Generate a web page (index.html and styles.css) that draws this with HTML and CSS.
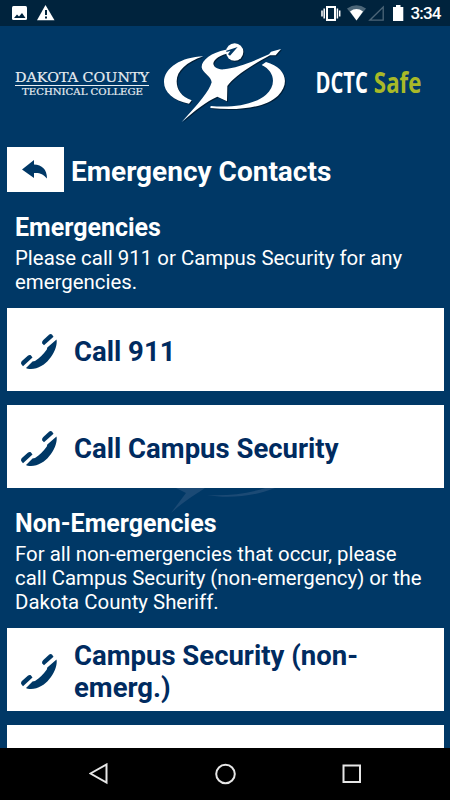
FILE: index.html
```html
<!DOCTYPE html>
<html lang="en">

<head>
    <meta charset="UTF-8">
    <title>DCTC Safe</title>
    <link rel="stylesheet" href="styles.css">
</head>

<body>
    <!-- shared icon -->
    <svg class="defs" width="0" height="0">
        <symbol id="phone" viewBox="0 0 36 36">
            <path d="M35.500 5.500C37.500 15 26 35 10 35C7.500 35 6 34.800 5 34L11.500 27.500L14 27C19 24 22.500 20 25.800 15.500L26.300 13.500Z" />
            <path d="M28 .8L22.300 6C21.100 7.200 20.800 8 21.300 9.500L23 11.200L32.500 2.800L31 .6C30 -.2 29 -.1 28 .8Z" />
            <path d="M6.800 21.800L1.200 26.800C-.1 28 -.2 29 .4 30.200L2 32.200L11.500 23.500L10 21.400C9 20.600 7.800 20.900 6.800 21.800Z" />
        </symbol>
    </svg>

    <div class="status">
        <svg width="60" height="26" viewBox="0 0 60 26">
            <rect x="12" y="6" width="15" height="14" rx="1.5" fill="#fff" />
            <path d="M14 18L17 14.5L19 16.5L22 13L25.5 18Z" fill="#00233d" />
            <path d="M45.500 5L54.500 20.300H37Z" fill="#fff" />
            <path d="M45 10H47V15H45ZM45 16.500H47V18.500H45Z" fill="#00233d" />
        </svg>
        <svg width="132" height="26" viewBox="318 0 132 26">
            <path d="M322 10.500V16.500M324.200 8.500V18.500M337.400 8.500V18.500M339.700 10.500V16.500" stroke="#fff" stroke-width="1.500" />
            <rect x="327" y="7" width="8" height="13" fill="none" stroke="#fff" stroke-width="2" />
            <path d="M347 8.500Q356.500 2 366 8.500L356.500 20.500Z" fill="#4c6678" />
            <path d="M350 11.500Q356.500 6.700 363 11.500L356.500 20.500Z" fill="#fff" />
            <path d="M383.200 7V20.200H369.800Z" fill="none" stroke="#4c6678" stroke-width="1.300" />
            <path d="M393 7H396V5H400.500V7H403.300V21H393Z" fill="#fff" />
            <text x="410.500" y="19.300" textLength="31" class="clock">3:34</text>
        </svg>
    </div>

    <main>
        <header>
            <svg width="150" height="95" viewBox="0 0 150 95">
                <text x="15" y="46.800" textLength="134" lengthAdjust="spacingAndGlyphs" class="college">DAKOTA COUNTY</text>
                <path d="M15 50.500H149" stroke="#e8edf1" stroke-width="1" />
                <text x="22" y="60" textLength="121" lengthAdjust="spacingAndGlyphs" class="technical">TECHNICAL COLLEGE</text>
            </svg>
            <svg width="150" height="95" viewBox="0 0 450 285">
                <g class="logo_shadow" transform="translate(3 3)">
                    <use href="#runner" />
                </g>
                <g id="runner">
                    <path d="M160 64C95 66 42 98 42 141C42 171 70 197 117 206L125 196C94 186 80 163 80 139C80 108 108 82 160 64Z" />
                    <path d="M335 90C375 109 380 150 348 179C316 207 250 220 182 213L181 219C270 229 349 216 384 182C423 143 405 96 348 81Z" />
                    <path d="M227 44C184 53 154 75 155 97C157 113 183 124 185 142C178 169 144 208 95 261C137 225 169 199 202 185L231 199L232 153C248 130 285 101 360 61L377 61L393 42L363 50L357 58C310 79 262 98 222 103C203 105 190 96 190 85C192 73 210 59 240 54Z" />
                    <circle cx="254" cy="51" r="26" />
                </g>
                <path d="M229 47L263 36L240 62L234 58L241 48L229 51Z" class="logo_gap" />
            </svg>
            <svg width="150" height="95" viewBox="0 0 150 95">
                <g transform="scale(.7 1)">
                    <text x="22" y="58" textLength="75" lengthAdjust="spacingAndGlyphs" class="brand">DCTC</text>
                    <text x="105.500" y="58" textLength="68" lengthAdjust="spacingAndGlyphs" class="brand safe">Safe</text>
                </g>
            </svg>
        </header>

        <div class="titel">
            <button class="back" aria-label="Back">
                <svg width="26" height="20" viewBox="0 0 26 20">
                    <path d="M0 9.500L12 0V4.500C20 5 25 9 25 18.500C21 13.500 17 12.500 12 13V18Z" />
                </svg>
            </button>
            <h1>Emergency Contacts</h1>
        </div>

        <section>
            <h2>Emergencies</h2>
            <p>Please call 911 or Campus Security for any emergencies.</p>
            <button class="call"><svg><use href="#phone" /></svg><span>Call 911</span></button>
            <button class="call"><svg><use href="#phone" /></svg><span>Call Campus Security</span></button>
        </section>

        <section class="non">
            <!-- faint logo behind the list -->
            <svg class="watermark" width="150" height="26" viewBox="0 0 150 26">
                <path d="M39 0H68C56 8 46 14 34 25L49 5L41 1Z" />
                <path d="M70 7C92 11 118 8 138 0H128C110 6 90 8 70 7Z" />
            </svg>
            <h2>Non-Emergencies</h2>
            <p>For all non-emergencies that occur, please call Campus Security (non-emergency) or the Dakota County Sheriff.</p>
            <button class="call"><svg><use href="#phone" /></svg><span>Campus Security (non-emerg.)</span></button>
            <button class="call"></button>
        </section>
    </main>

    <nav>
        <svg width="20" height="22" viewBox="0 0 20 22"><path d="M17.500 1.500V19.500L1.500 10.500Z" /></svg>
        <svg width="22" height="22" viewBox="0 0 22 22"><circle cx="10.500" cy="11" r="9.300" /></svg>
        <svg width="20" height="20" viewBox="0 0 20 20"><rect x="1.500" y="1.500" width="16.500" height="16.500" /></svg>
    </nav>
</body>

</html>
```
FILE: styles.css
```css
* {
    margin: 0;
    box-sizing: border-box;
}

body {
    height: 800px;
    display: flex;
    flex-direction: column;
    overflow: hidden;
    background: #003866;
    color: #fff;
    font-family: Roboto, sans-serif;
}

svg {
    display: block;
    flex: none;
}

.defs {
    position: absolute;
}

.status {
    display: flex;
    justify-content: space-between;
    height: 26px;
    flex: none;
    background: #00233d;
}

.clock {
    fill: #fff;
    font-size: 17px;
    font-weight: 500;
}

main {
    flex: 1;
    min-height: 0;
    overflow: hidden;
    padding: 0 6px 0 7px;
}

header {
    display: flex;
    margin: 0 -6px 0 -7px;
    padding: 9px 0 17px;
}

.college,
.technical {
    fill: #e8edf1;
    font-family: "DejaVu Serif", serif;
    font-size: 13.5px;
    stroke: #e8edf1;
    stroke-width: .2px;
}

.technical {
    font-size: 9px;
}

header g {
    fill: #fff;
}

.logo_shadow {
    filter: brightness(0);
    opacity: .45;
}

.logo_gap {
    fill: #003866;
}

.brand {
    fill: #fff;
    font-family: "Open Sans", sans-serif;
    font-size: 29px;
    font-weight: 700;
}

.safe {
    fill: #a8b928;
}

.titel {
    display: flex;
    align-items: center;
    gap: 7px;
    height: 45px;
    margin-bottom: 20px;
}

button {
    border: 0;
    border-radius: 0;
    background: #fff;
    color: #002b60;
    fill: #003866;
}

.back {
    width: 57px;
    height: 45px;
    padding: 0 0 0 15px;
}

h1 {
    padding-top: 3px;
    font-size: 28px;
    font-weight: 700;
    white-space: nowrap;
}

h2 {
    padding-left: 8px;
    font-size: 25px;
    line-height: 32px;
}

p {
    height: 64px;
    padding: 2px 20px 0 8px;
    font-size: 20.4px;
    line-height: 24px;
}

.call {
    display: flex;
    align-items: center;
    gap: 17px;
    width: 437px;
    height: 83px;
    margin-bottom: 14px;
    padding: 4px 14px 0;
    font: 700 27.5px/32px Roboto, sans-serif;
    text-align: left;
}

.call svg {
    width: 36px;
    height: 36px;
}

.non {
    position: relative;
    padding-top: 6px;
}

.non p {
    height: 88px;
}

.watermark {
    position: absolute;
    left: 130px;
    top: -14px;
    fill: #1b4a75;
}

.non h2,
.non p {
    position: relative;
}

nav {
    display: flex;
    justify-content: space-between;
    align-items: center;
    height: 52px;
    flex: none;
    padding: 0 88px 0 89px;
    background: #000;
    fill: none;
    stroke: #e6e6e6;
    stroke-width: 2px;
}
```
